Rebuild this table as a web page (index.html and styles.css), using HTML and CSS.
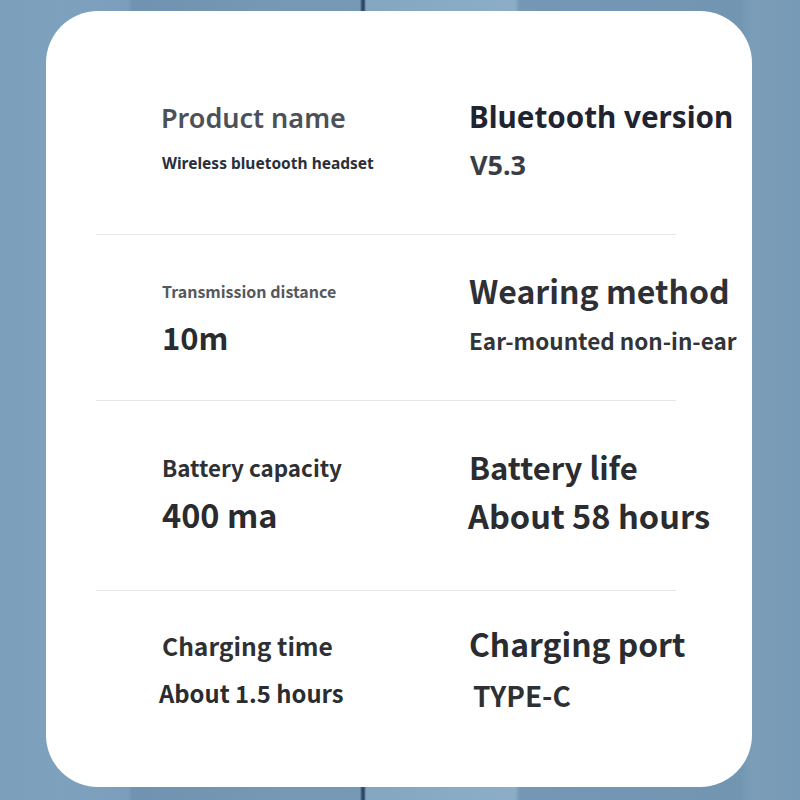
FILE: index.html
```html
<!DOCTYPE html>
<html>
<head>
<meta charset="utf-8">
<link rel="stylesheet" href="styles.css">
</head>
<body>
<div class="bg">
  <div class="card">
    <section class="row row1">
      <div class="cell">
        <div class="line l1"><span class="t product">Product name</span></div>
        <div class="line l2"><span class="t wireless">Wireless bluetooth headset</span></div>
      </div>
      <div class="cell">
        <div class="line l1"><span class="t btv">Bluetooth version</span></div>
        <div class="line l2"><span class="t v53">V5.3</span></div>
      </div>
    </section>
    <section class="row row2">
      <div class="cell">
        <div class="line l1"><span class="t trans">Transmission distance</span></div>
        <div class="line l2"><span class="t tenm">10m</span></div>
      </div>
      <div class="cell">
        <div class="line l1"><span class="t wearing">Wearing method</span></div>
        <div class="line l2"><span class="t earm">Ear-mounted non-in-ear</span></div>
      </div>
    </section>
    <section class="row row3">
      <div class="cell">
        <div class="line l1"><span class="t batcap">Battery capacity</span></div>
        <div class="line l2"><span class="t ma">400 ma</span></div>
      </div>
      <div class="cell">
        <div class="line l1"><span class="t batlife">Battery life</span></div>
        <div class="line l2"><span class="t hours58">About 58 hours</span></div>
      </div>
    </section>
    <section class="row row4">
      <div class="cell">
        <div class="line l1"><span class="t chtime">Charging time</span></div>
        <div class="line l2"><span class="t hours15">About 1.5 hours</span></div>
      </div>
      <div class="cell">
        <div class="line l1"><span class="t chport">Charging port</span></div>
        <div class="line l2"><span class="t typec">TYPE-C</span></div>
      </div>
    </section>
  </div>
</div>
</body>
</html>
```

FILE: styles.css
```css
html, body {
  margin: 0;
  padding: 0;
}
body {
  width: 800px;
  height: 800px;
  overflow: hidden;
}
.bg {
  width: 800px;
  height: 800px;
  display: flex;
  flex-direction: column;
  background: linear-gradient(to right,
    #7b9fbb 0px, #7ea2be 60px, #7a9ebb 128px,
    #6f93b0 132px, #7699b5 300px, #7598b4 360px,
    #2f4a66 362px, #2f4a66 364px,
    #83a6c1 366px, #88abc5 440px, #8badc7 515px,
    #7397b4 520px, #7296b2 740px,
    #7b9db8 752px, #779ab6 800px);
}
.card {
  margin: 11px 48px 0 46px;
  height: 776px;
  background: #ffffff;
  border-radius: 52px;
  padding: 0 50px;
  box-sizing: border-box;
}
.row {
  width: 580px;
  display: grid;
  grid-template-columns: 308px 1fr;
  padding-left: 65px;
  box-sizing: border-box;
  border-bottom: 1px solid #e6e6e6;
}
.row4 { border-bottom: none; }
.row1 { padding-top: 86px; height: 224px; }
.row2 { padding-top: 36px; height: 166px; }
.row3 { padding-top: 46px; height: 190px; }
.row4 { padding-top: 34px; }
.cell {
  display: flex;
  flex-direction: column;
  white-space: nowrap;
}
.line {
  height: 40px;
  display: flex;
  align-items: center;
}
.row1 .l2 { margin-top: 7px; }
.row2 .l2 { margin-top: 8px; }
.row3 .l2, .row4 .l2 { margin-top: 9px; }
.t {
  font-family: "Noto Sans CJK SC", sans-serif;
  font-weight: 700;
  line-height: 1;
  color: #2b2e35;
}
.product { font-family: "Noto Sans", sans-serif; font-size: 27px; font-weight: 600; color: #4c5159; }
.wireless { font-family: "Noto Sans", sans-serif; font-size: 15.5px; color: #2a2f3a; margin-left: 1px; }
.btv { font-family: "Noto Sans", sans-serif; font-size: 29.6px; color: #1f2430; }
.v53 { font-family: "Noto Sans", sans-serif; font-size: 27px; color: #3a3d45; margin-left: 1px; }
.trans { font-size: 16px; font-weight: 600; color: #55585e; margin-left: 1px; }
.tenm { font-size: 31px; color: #2a2b2e; margin-left: 1px; margin-top: -5px; }
.wearing { font-size: 32px; color: #2e3035; margin-top: -3px; }
.earm { font-size: 22.5px; color: #323438; margin-top: 3px; }
.batcap { font-size: 22.4px; color: #2e3034; margin-top: 1px; margin-left: 1px; }
.ma { font-size: 32.5px; color: #2a2b2e; margin-left: 1px; margin-top: -3px; }
.batlife { font-size: 31px; color: #2a2c30; margin-top: -1px; }
.hours58 { font-size: 32.6px; color: #2a2c30; margin-left: -1px; margin-top: -2px; }
.chtime { font-size: 24.6px; color: #2e3034; margin-left: 1px; }
.hours15 { font-size: 23.8px; color: #2a2c30; margin-left: -2px; margin-top: -2px; }
.chport { font-size: 31.8px; color: #2a2c30; margin-top: -2px; }
.typec { font-size: 28px; font-weight: 600; color: #2f3034; margin-left: 4px; margin-top: 2px; }
```
